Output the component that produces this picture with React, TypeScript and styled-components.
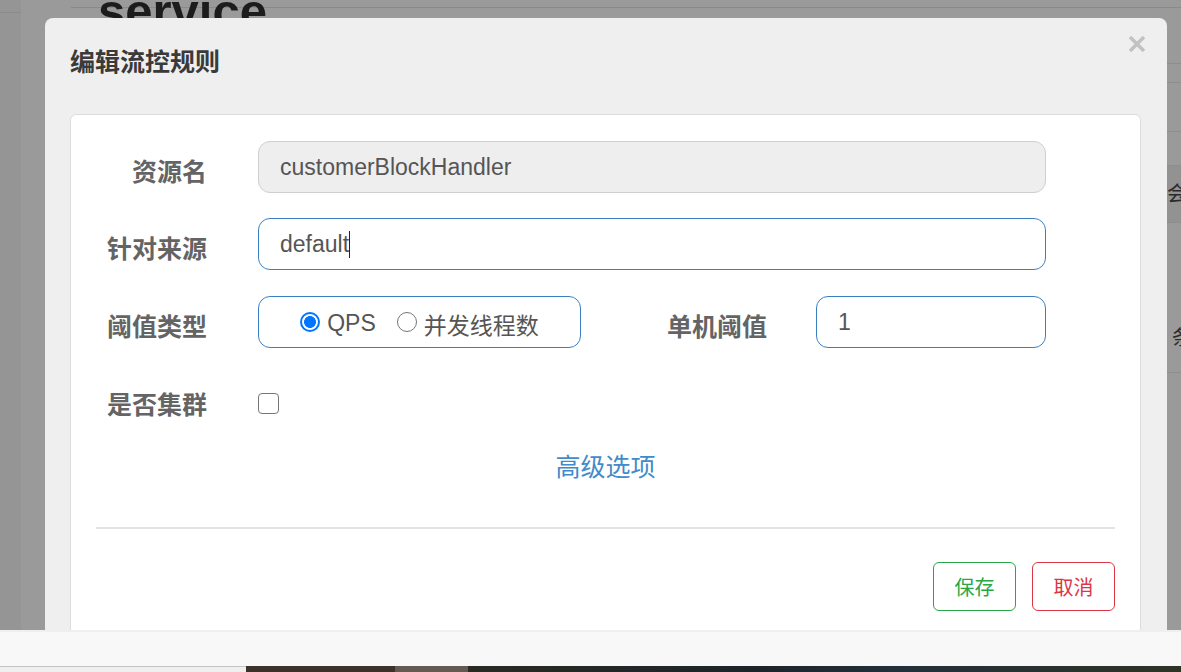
import React from "react";
import styled, { createGlobalStyle } from "styled-components";

const GlobalStyle = createGlobalStyle`
  html, body { margin: 0; padding: 0; }
  body {
    font-family: "Liberation Sans", "Noto Sans CJK SC", sans-serif;
    background: #f8f8f8;
    overflow: hidden;
  }
  * { box-sizing: border-box; }
`;

const Screen = styled.div`
  width: 1181px;
  height: 672px;
  display: flex;
  flex-direction: column;
  overflow: hidden;
`;

const Viewport = styled.div`
  position: relative;
  height: 630px;
  flex: none;
  overflow: hidden;
`;

/* ---------- dimmed page behind the dialog ---------- */
const Backdrop = styled.div`
  display: flex;
  height: 100%;
`;

const SideStrip = styled.div`
  width: 21px;
  flex: none;
  background: #959595;
`;

const SideTop = styled.div`
  height: 13px;
  border-bottom: 1px solid #8b8b8b;
`;

const PageBody = styled.div`
  flex: 1;
  min-width: 0;
  background: #9a9a9a;
  overflow: hidden;
`;

const TopRule = styled.div`
  height: 8px;
  margin-left: 50px;
  border-bottom: 1px solid #8a8a8a;
`;

const PageTitle = styled.h1`
  margin: -21px 0 0 77px;
  font-family: "Liberation Sans", sans-serif;
  font-size: 49px;
  line-height: 49px;
  font-weight: 700;
  color: #1c1c1c;
`;

const Table = styled.div`
  margin: 27px 0 0 60px;
`;

const TableRow = styled.div<{ $h: number; $band?: boolean; $pad?: number }>`
  display: grid;
  grid-template-columns: 1086px 1fr;
  height: ${(p) => p.$h}px;
  border-top: 1px solid #8d8d8d;
  background: ${(p) => (p.$band ? "#929292" : "transparent")};
  padding-top: ${(p) => p.$pad ?? 0}px;
  font-size: 20px;
  color: #2a2a2a;
  white-space: nowrap;
  font-family: "Noto Sans CJK SC", sans-serif;
`;

const CellText = styled.span<{ $indent?: number }>`
  padding-left: ${(p) => p.$indent ?? 0}px;
`;

/* ---------- dialog ---------- */
const Modal = styled.div`
  position: absolute;
  left: 45px;
  top: 18px;
  width: 1122px;
  height: 700px;
  background: #efefef;
  border-radius: 8px;
  padding: 0 26px 0 25px;
  display: flex;
  flex-direction: column;
`;

const ModalHeader = styled.div`
  display: flex;
  justify-content: space-between;
  align-items: flex-start;
  padding-top: 17px;
  margin-bottom: 37px;
`;

const ModalTitle = styled.h4`
  margin: 8px 0 0;
  font-size: 25px;
  line-height: 34px;
  font-weight: 700;
  color: #3a3a3a;
  font-family: "Noto Sans CJK SC", sans-serif;
`;

const CloseButton = styled.button`
  border: 0;
  background: none;
  padding: 0;
  margin-right: -5px;
  width: 18px;
  height: 18px;
  display: flex;
  cursor: pointer;
`;

const Panel = styled.div`
  flex: 1;
  background: #fff;
  border: 1px solid #dcdcdc;
  border-radius: 6px;
  padding: 26px 25px 0;
  display: flex;
  flex-direction: column;
`;

const FormRow = styled.div<{ $mt?: number; $center?: boolean }>`
  display: flex;
  align-items: ${(p) => (p.$center ? "center" : "flex-start")};
  height: 52px;
  margin-top: ${(p) => p.$mt ?? 0}px;
`;

const Label = styled.label<{ $w: number; $gap: number; $flat?: boolean }>`
  width: ${(p) => p.$w}px;
  margin-right: ${(p) => p.$gap}px;
  flex: none;
  text-align: right;
  font-family: "Noto Sans CJK SC", sans-serif;
  font-size: 25px;
  font-weight: 700;
  color: #646464;
  line-height: 52px;
  padding-top: ${(p) => (p.$flat ? 0 : 3)}px;
  white-space: nowrap;
`;

const Field = styled.div<{ $w: number; $disabled?: boolean }>`
  width: ${(p) => p.$w}px;
  height: 52px;
  flex: none;
  display: flex;
  align-items: center;
  padding: 0 21px;
  border-radius: 12px;
  border: 1px solid ${(p) => (p.$disabled ? "#cfcfcf" : "#3a7fc2")};
  background: ${(p) => (p.$disabled ? "#eeeeee" : "#fff")};
  font-size: 23px;
  color: #555;
`;

const Caret = styled.span`
  display: inline-block;
  width: 1px;
  height: 27px;
  background: #222;
`;

const RadioGroup = styled.div`
  width: 323px;
  height: 52px;
  flex: none;
  display: flex;
  align-items: center;
  justify-content: center;
  border: 1px solid #3a7fc2;
  border-radius: 12px;
  font-size: 23px;
  color: #555;
`;

const RadioOption = styled.label<{ $gapAfter?: number }>`
  display: flex;
  align-items: center;
  gap: 7px;
  margin-right: ${(p) => p.$gapAfter ?? 0}px;
  padding-top: 3px;
`;

const RadioDot = styled.span<{ $checked?: boolean }>`
  width: 20px;
  height: 20px;
  border-radius: 50%;
  flex: none;
  margin-top: -3px;
  border: ${(p) => (p.$checked ? "2px solid #0075ff" : "1.5px solid #767676")};
  background: ${(p) =>
    p.$checked
      ? "radial-gradient(circle, #0075ff 0 5.6px, #fff 6.2px)"
      : "#fff"};
`;

const CheckBox = styled.span`
  width: 21px;
  height: 21px;
  border: 1.5px solid #767676;
  border-radius: 4px;
  background: #fff;
  flex: none;
`;

const AdvancedLink = styled.a`
  display: block;
  margin-top: 18px;
  text-align: center;
  font-family: "Noto Sans CJK SC", sans-serif;
  font-size: 25px;
  line-height: 36px;
  color: #428bca;
  text-decoration: none;
  cursor: pointer;
`;

const Divider = styled.hr`
  margin: 44px 0 0;
  border: 0;
  border-top: 2px solid #e3e3e3;
  height: 0;
`;

const Footer = styled.div`
  display: flex;
  justify-content: flex-end;
  gap: 16px;
  margin-top: 33px;
`;

const ActionButton = styled.button<{ $tone: "save" | "cancel" }>`
  width: 83px;
  height: 49px;
  background: #fff;
  border-radius: 6px;
  font-family: "Noto Sans CJK SC", sans-serif;
  font-size: 20px;
  cursor: pointer;
  border: 1px solid ${(p) => (p.$tone === "save" ? "#28a745" : "#dc3545")};
  color: ${(p) => (p.$tone === "save" ? "#28a745" : "#dc3545")};
`;

/* ---------- bottom chrome ---------- */
const BottomBar = styled.div`
  height: 36px;
  flex: none;
  background: #f8f8f8;
  border-top: 2px solid #efefef;
`;

const Taskbar = styled.div`
  height: 6px;
  flex: none;
  display: flex;
`;

const TaskSeg = styled.div<{ $w?: number; $bg: string; $line?: boolean }>`
  width: ${(p) => (p.$w ? `${p.$w}px` : "auto")};
  flex: ${(p) => (p.$w ? "none" : 1)};
  background: ${(p) => p.$bg};
  border-top: ${(p) => (p.$line ? "1px solid #c4c4c4" : "0")};
`;

export default function App() {
  return (
    <>
      <GlobalStyle />
      <Screen>
        <Viewport>
          <Backdrop>
            <SideStrip>
              <SideTop />
            </SideStrip>
            <PageBody>
              <TopRule />
              <PageTitle>service</PageTitle>
              <Table>
                <TableRow $h={19} />
                <TableRow $h={49} />
                <TableRow $h={34} />
                <TableRow $h={57} $band $pad={12}>
                  <span />
                  <CellText>会</CellText>
                </TableRow>
                <TableRow $h={150} $pad={99}>
                  <span />
                  <CellText $indent={5}>条</CellText>
                </TableRow>
                <TableRow $h={120} />
              </Table>
            </PageBody>
          </Backdrop>

          <Modal>
            <ModalHeader>
              <ModalTitle>编辑流控规则</ModalTitle>
              <CloseButton aria-label="close">
                <svg width="18" height="18" viewBox="0 0 18 18">
                  <path
                    d="M2 2 L16 16 M16 2 L2 16"
                    stroke="#c2c2c2"
                    strokeWidth="3.6"
                    strokeLinecap="butt"
                  />
                </svg>
              </CloseButton>
            </ModalHeader>

            <Panel>
              <FormRow>
                <Label $w={111} $gap={51}>资源名</Label>
                <Field $w={788} $disabled>
                  customerBlockHandler
                </Field>
              </FormRow>

              <FormRow $mt={25}>
                <Label $w={111} $gap={51}>针对来源</Label>
                <Field $w={788}>
                  default
                  <Caret />
                </Field>
              </FormRow>

              <FormRow $mt={26}>
                <Label $w={111} $gap={51}>阈值类型</Label>
                <RadioGroup>
                  <RadioOption $gapAfter={21}>
                    <RadioDot $checked />
                    QPS
                  </RadioOption>
                  <RadioOption>
                    <RadioDot />
                    并发线程数
                  </RadioOption>
                </RadioGroup>
                <Label $w={186} $gap={49}>单机阈值</Label>
                <Field $w={230}>1</Field>
              </FormRow>

              <FormRow $mt={29} $center>
                <Label $w={111} $gap={51} $flat>是否集群</Label>
                <CheckBox />
              </FormRow>

              <AdvancedLink>高级选项</AdvancedLink>

              <Divider />

              <Footer>
                <ActionButton $tone="save">保存</ActionButton>
                <ActionButton $tone="cancel">取消</ActionButton>
              </Footer>
            </Panel>
          </Modal>
        </Viewport>
        <BottomBar />
        <Taskbar>
          <TaskSeg $w={246} $bg="#efefef" $line />
          <TaskSeg $w={149} $bg="#3b3229" />
          <TaskSeg $w={73} $bg="#635a51" />
          <TaskSeg $bg="linear-gradient(90deg, #2a2a24, #1d2428 40%, #22303a 60%, #2f3326)" />
        </Taskbar>
      </Screen>
    </>
  );
}
